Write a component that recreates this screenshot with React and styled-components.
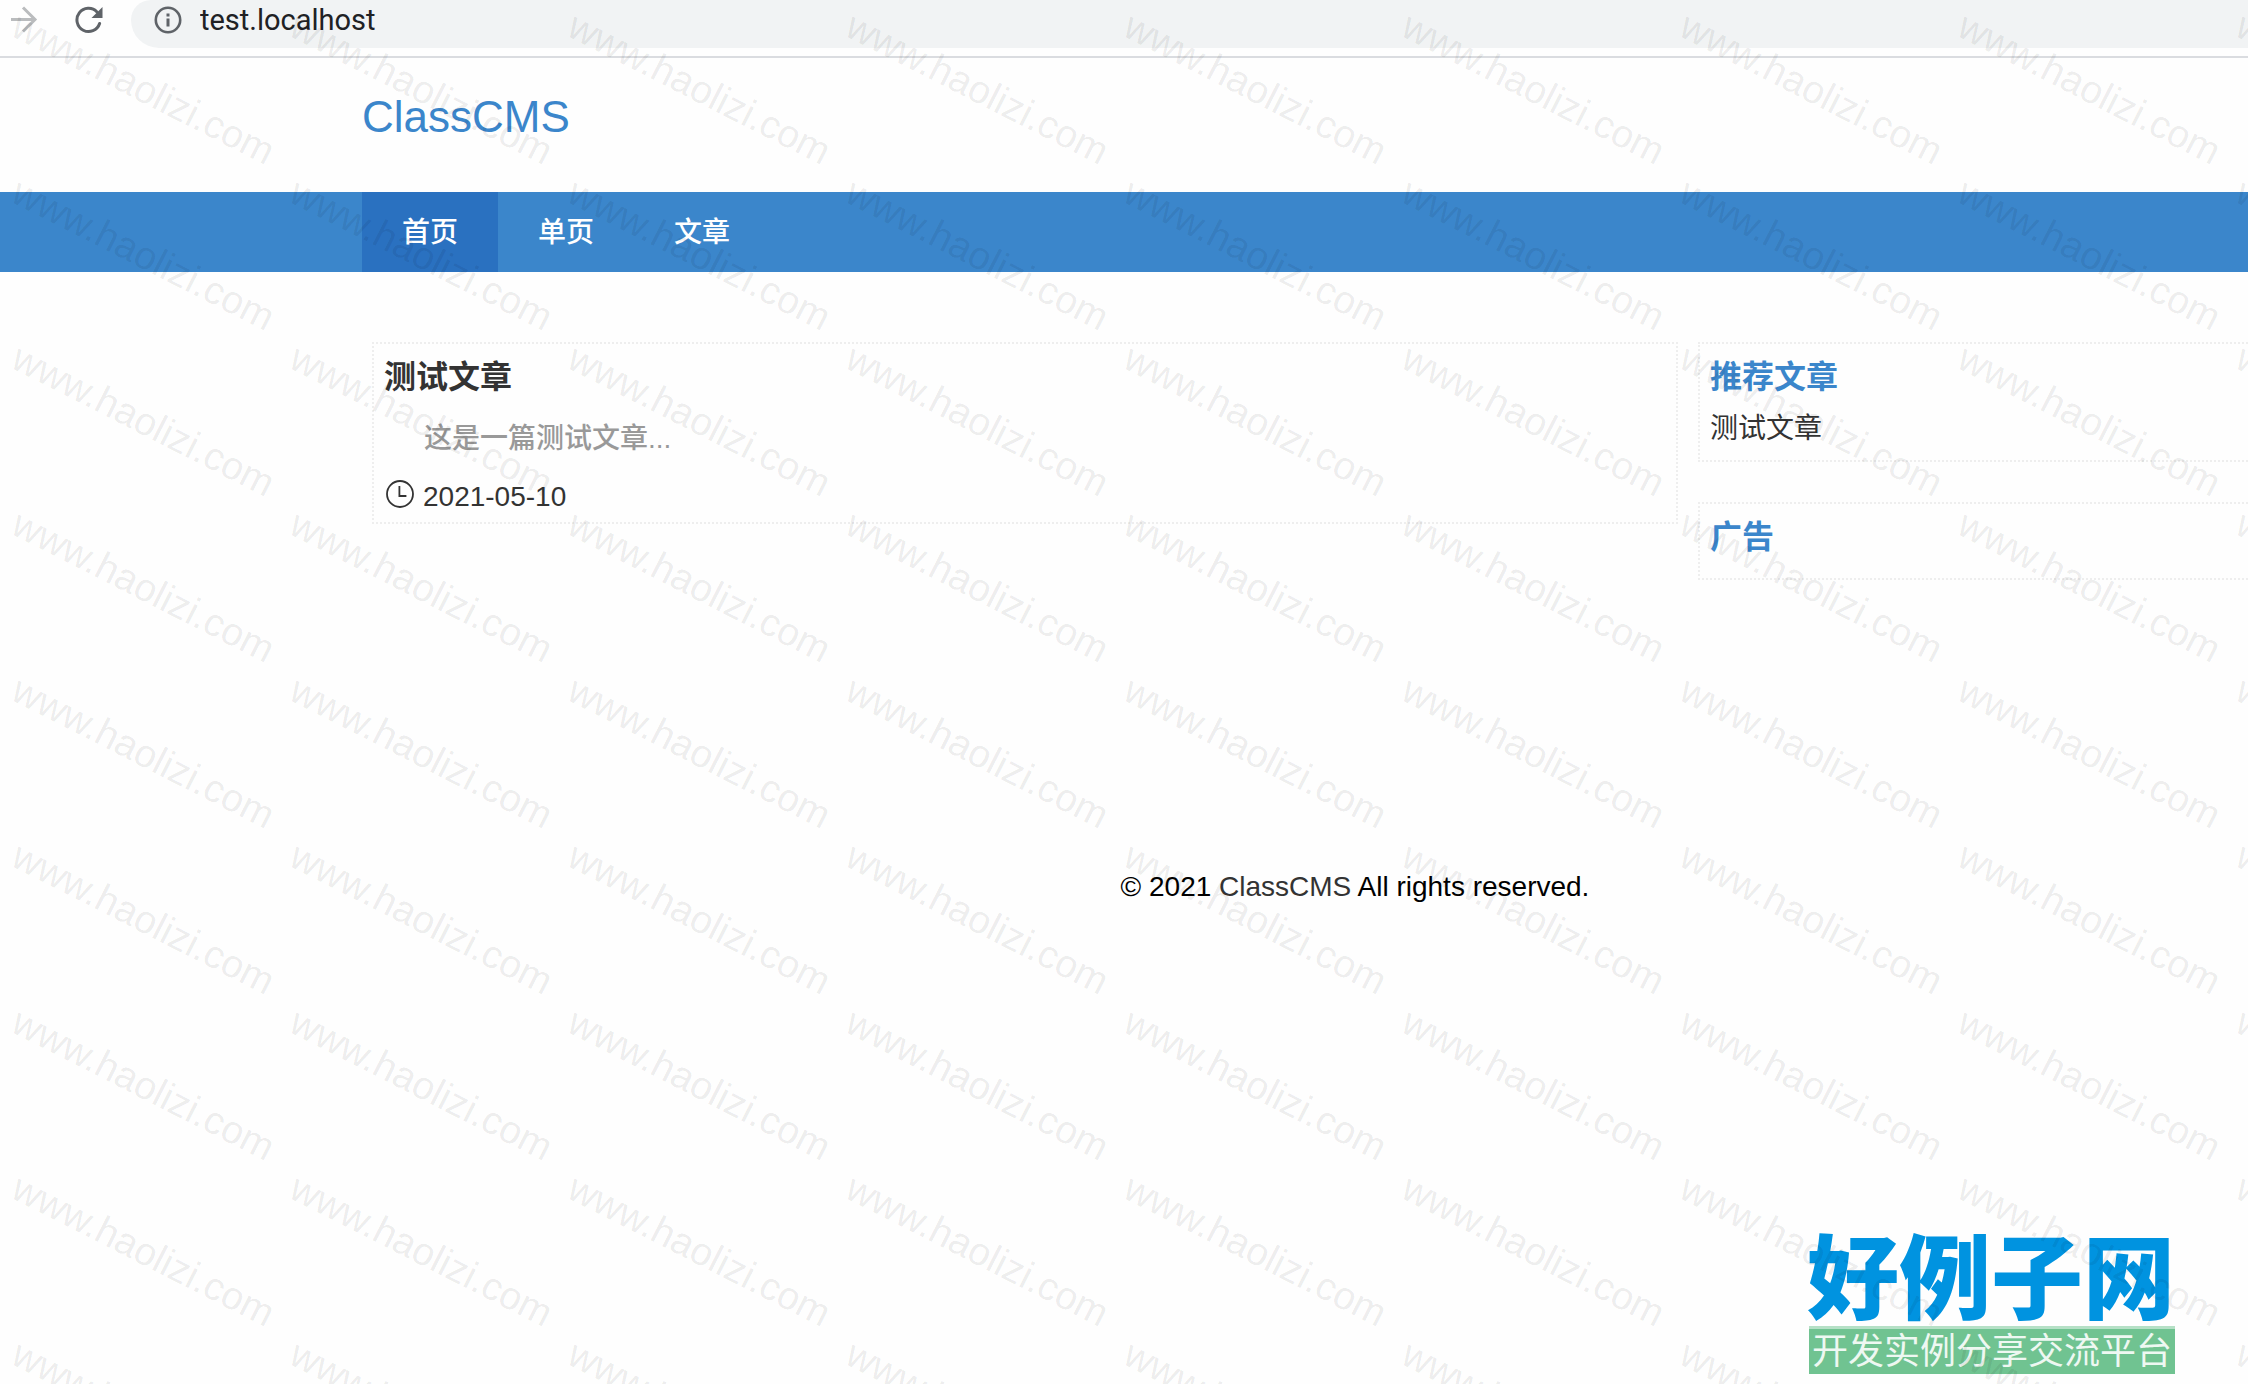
import React from "react";
import styled, { createGlobalStyle } from "styled-components";

const sans = `"Liberation Sans", "Noto Sans CJK SC", sans-serif`;

const GlobalStyle = createGlobalStyle`
  * {
    box-sizing: border-box;
  }

  body {
    margin: 0;
    background: #fefefe;
    color: #333;
    font-family: ${sans};
    font-size: 28px;
    font-weight: 500;
  }

  a {
    color: inherit;
    text-decoration: none;
  }
`;

const Page = styled.div`
  position: relative;
  min-height: 100vh;
  overflow: hidden;
`;

const Toolbar = styled.header`
  display: flex;
  height: 58px;
  border-bottom: 2px solid #dadce0;
  color: #5f6368;
`;

const ToolButton = styled.button`
  display: flex;
  width: ${(props) => props.$width}px;
  height: 40px;
  padding: 0;
  justify-content: flex-end;
  align-items: center;
  border: 0;
  background: none;
  color: ${(props) => (props.disabled ? "#babcbe" : "#5f6368")};
`;

const AddressBar = styled.label`
  display: flex;
  flex: 1;
  height: 48px;
  margin-left: 28px;
  padding: 0 0 8px 21px;
  gap: 16px;
  align-items: center;
  border-bottom-left-radius: 28px;
  border-top-left-radius: 20px;
  background: #f1f3f4;
`;

const AddressInput = styled.input`
  flex: 1;
  padding: 0;
  border: 0;
  outline: 0;
  background: none;
  color: #202124;
  font-family: Roboto, sans-serif;
  font-size: 29px;
`;

const Header = styled.div`
  padding: 35px 0 0 362px;
  height: 134px;
`;

const Brand = styled.a`
  color: #3b86cb;
  font-size: 44px;
  line-height: 48px;
`;

const Nav = styled.nav`
  display: flex;
  padding-left: 362px;
  background: #3b86cb;
`;

const NavLink = styled.a`
  padding: 2px 40px 0;
  background: ${(props) => (props.$active ? "#2a71c0" : "transparent")};
  color: #fff;
  line-height: 78px;
`;

const Content = styled.main`
  display: flex;
  padding: 70px 0 0 372px;
  gap: 20px;
  align-items: flex-start;
`;

const Panel = styled.section`
  padding: 8px 10px 4px;
  border: 2px dotted #eee;
`;

const Article = styled(Panel)`
  flex: 1;
`;

const Sidebar = styled.aside`
  display: flex;
  flex-direction: column;
  width: 550px;
  gap: 40px;
`;

const SidePanel = styled(Panel)`
  min-height: 78px;
  border-right: 0;
`;

const Title = styled.h2`
  margin: 0;
  color: ${(props) => (props.$blue ? "#3b86cb" : "#333")};
  font-size: 32px;
  line-height: 50px;
`;

const Summary = styled.p`
  margin: 0;
  padding: 8px 40px;
  color: #999;
  line-height: 58px;
`;

const Meta = styled.div`
  display: flex;
  gap: 9px;
  align-items: center;
  line-height: 42px;
`;

const SideLink = styled.a`
  display: block;
  font-weight: 400;
  line-height: 54px;
`;

const Footer = styled.footer`
  margin-top: 285px;
  padding-left: 462px;
  color: #000;
  line-height: 44px;
  text-align: center;

  a {
    color: #333;
  }
`;

const WatermarkLayer = styled.div`
  position: absolute;
  inset: 0;
  display: grid;
  grid-template-columns: repeat(9, 278px);
  grid-auto-rows: 166px;
  overflow: hidden;
  pointer-events: none;
`;

const WatermarkText = styled.span`
  padding-left: 10px;
  color: rgba(0, 0, 0, 0.08);
  font-family: "Liberation Sans", sans-serif;
  font-size: 39px;
  line-height: 40px;
  white-space: nowrap;
  transform: rotate(27deg);
  transform-origin: 6px 32px;
`;

const SiteBadge = styled.div`
  position: absolute;
  right: 73px;
  bottom: 10px;
  text-align: center;
  white-space: nowrap;
`;

const BadgeName = styled.div`
  padding-bottom: 6px;
  color: #0093e0;
  font-family: "Noto Sans CJK SC", sans-serif;
  font-size: 92px;
  font-weight: 900;
  line-height: 96px;
`;

const BadgeSlogan = styled.div`
  margin-left: 2px;
  padding-bottom: 7px;
  border-top: 3px solid #b5e0c6;
  background: #70c391;
  color: #eef8f2;
  font-family: "Noto Sans CJK SC", sans-serif;
  font-size: 36px;
  font-weight: 400;
  line-height: 38px;
`;

const ForwardIcon = () => (
  <svg width="28" height="28" viewBox="0 0 28 28" fill="none" stroke="currentColor" strokeWidth="3">
    <path d="M1 13.5h24M13 1.5l12 12-12 12" />
  </svg>
);

const ReloadIcon = () => (
  <svg width="28" height="28" viewBox="0 0 28 28">
    <path
      d="M24.6 17.5A11.6 11.6 0 1 1 22 6"
      fill="none"
      stroke="currentColor"
      strokeWidth="3"
      strokeLinecap="round"
    />
    <path d="M27.5 1v11H16.5z" fill="currentColor" />
  </svg>
);

const InfoIcon = () => (
  <svg width="32" height="32" viewBox="0 0 32 32">
    <circle cx="16" cy="16" r="12.2" fill="none" stroke="currentColor" strokeWidth="2.6" />
    <path d="M14.5 9.5h3v3h-3zM14.5 14.5h3v8h-3z" fill="currentColor" />
  </svg>
);

const ClockIcon = () => (
  <svg width="30" height="34" viewBox="0 0 30 34" fill="none" stroke="currentColor" strokeWidth="1.8">
    <circle cx="16" cy="14" r="13" />
    <path d="M15.4 6v10h7" />
  </svg>
);

const menu = ["首页", "单页", "文章"];

function Watermark() {
  return (
    <WatermarkLayer aria-hidden="true">
      {Array.from({ length: 81 }, (_, i) => (
        <WatermarkText key={i}>www.haolizi.com</WatermarkText>
      ))}
    </WatermarkLayer>
  );
}

function App() {
  return (
    <Page>
      <GlobalStyle />
      <Toolbar>
        <ToolButton $width={38} disabled aria-label="Forward">
          <ForwardIcon />
        </ToolButton>
        <ToolButton $width={65} aria-label="Reload">
          <ReloadIcon />
        </ToolButton>
        <AddressBar>
          <InfoIcon />
          <AddressInput aria-label="Address" defaultValue="test.localhost" />
        </AddressBar>
      </Toolbar>

      <Header>
        <Brand href="#">ClassCMS</Brand>
      </Header>
      <Nav>
        {menu.map((name, i) => (
          <NavLink key={name} href="#" $active={i === 0}>
            {name}
          </NavLink>
        ))}
      </Nav>

      <Content>
        <Article>
          <Title>
            <a href="#">测试文章</a>
          </Title>
          <Summary>这是一篇测试文章...</Summary>
          <Meta>
            <ClockIcon />
            <time>2021-05-10</time>
          </Meta>
        </Article>
        <Sidebar>
          <SidePanel>
            <Title $blue>推荐文章</Title>
            <SideLink href="#">测试文章</SideLink>
          </SidePanel>
          <SidePanel>
            <Title $blue>广告</Title>
          </SidePanel>
        </Sidebar>
      </Content>

      <Footer>
        © 2021 <a href="#">ClassCMS</a> All rights reserved.
      </Footer>

      <SiteBadge>
        <BadgeName>好例子网</BadgeName>
        <BadgeSlogan>开发实例分享交流平台</BadgeSlogan>
      </SiteBadge>
      <Watermark />
    </Page>
  );
}

export default App;
